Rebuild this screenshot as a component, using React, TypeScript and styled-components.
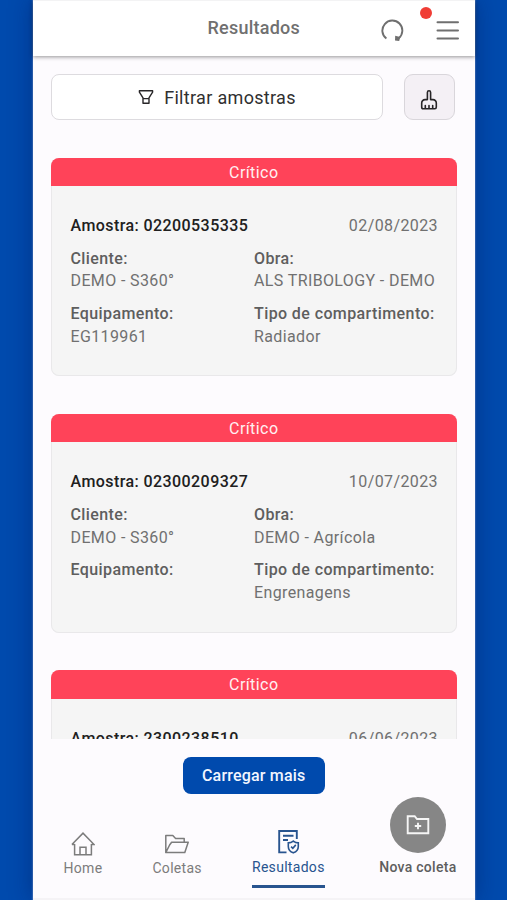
import React from "react";
import styled, { createGlobalStyle } from "styled-components";

const GlobalStyle = createGlobalStyle`
  * { box-sizing: border-box; }
  body { margin: 0; background: #004aad; font-family: Roboto, "Liberation Sans", sans-serif; }
  button { font-family: inherit; margin: 0; padding: 0; cursor: pointer; }
`;

const Backdrop = styled.div`
  height: 900px;
  padding: 0 32px 0 32.5px;
  overflow: hidden;
  background: #004aad;
`;

const Phone = styled.main`
  height: 100%;
  display: flex;
  flex-direction: column;
  background: #fdfbfe;
  box-shadow: 0 0 22px rgba(0, 20, 80, 0.42), 0 0 1px 1px rgba(110, 150, 210, 0.45);
`;

const Header = styled.header`
  height: 56px;
  flex: none;
  display: grid;
  grid-template-columns: 1fr auto 1fr;
  align-items: center;
  background: #fff;
  border-top: 1px solid #f3f3f4;
  box-shadow: 0 1px 4px rgba(0, 0, 0, 0.42);
`;

const Title = styled.h1`
  grid-column: 2;
  margin: 0 0 1px;
  font-size: 18px;
  font-weight: 500;
  line-height: 24px;
  letter-spacing: 0.25px;
  color: #707070;
`;

const HeaderActions = styled.div`
  position: relative;
  display: flex;
  justify-content: flex-end;
  align-items: center;
  gap: 31px;
  padding: 4px 15.5px 0 0;
  height: 100%;
`;

const Dot = styled.span`
  position: absolute;
  top: 6px;
  right: 43.5px;
  width: 12px;
  height: 12px;
  border-radius: 50%;
  background: #f03d35;
`;

const Filters = styled.div`
  flex: none;
  display: flex;
  gap: 21px;
  padding: 18px 20.5px 37.5px 18.5px;
`;

const FilterButton = styled.button`
  flex: 1;
  height: 46px;
  display: flex;
  align-items: center;
  justify-content: center;
  gap: 10.5px;
  border: 1px solid #dddbdf;
  border-radius: 8px;
  background: #fff;
  color: #303030;
  font-size: 18px;
  letter-spacing: 0.32px;
`;

const ClearButton = styled.button`
  width: 51px;
  height: 46px;
  display: flex;
  align-items: center;
  justify-content: center;
  padding-top: 5px;
  border: 1px solid #d9d6db;
  border-radius: 9px;
  background: #f4f0f5;
`;

const List = styled.section`
  flex: none;
  height: 581px;
  overflow: hidden;
  padding: 0 18.5px;
  display: flex;
  flex-direction: column;
  gap: 37.6px;
`;

const Card = styled.article`
  flex: none;
  height: 218.8px;
  border-radius: 8px;
  overflow: hidden;
  background: #f5f5f5;
  box-shadow: inset 0 0 0 1px #e9e8ea;
`;

const Status = styled.div`
  height: 28.5px;
  line-height: 29.5px;
  background: #ff4359;
  color: #fff0f2;
  text-align: center;
  font-size: 16px;
  letter-spacing: 0.42px;
`;

const CardBody = styled.div`
  padding: 28.75px 18.5px 0 19.5px;
  font-size: 16px;
  line-height: 22.75px;
  color: #707070;
`;

const CardTop = styled.div`
  display: flex;
  justify-content: space-between;
  margin-bottom: 10px;
`;

const SampleId = styled.strong`
  font-weight: 500;
  color: #202020;
  letter-spacing: 0.42px;
`;

const SampleDate = styled.time`
  letter-spacing: 0.4px;
`;

const Fields = styled.dl`
  margin: 0;
  display: grid;
  grid-template-columns: 183.5px 1fr;
  row-gap: 10px;
`;

const FieldBox = styled.div`
  min-width: 0;
  white-space: nowrap;
`;

const FieldLabel = styled.dt`
  font-weight: 500;
  color: #5e5e5e;
  letter-spacing: 0.4px;
`;

const FieldValue = styled.dd`
  margin: 0;
  letter-spacing: 0.38px;
`;

const LoadArea = styled.div`
  flex: none;
  display: flex;
  justify-content: center;
  padding: 18.5px 0 0;
`;

const LoadButton = styled.button`
  width: 141.5px;
  height: 37px;
  border: 0;
  border-radius: 8px;
  background: #004aad;
  color: #f2f6ff;
  font-size: 16px;
  font-weight: 500;
  letter-spacing: 0.2px;
`;

const Nav = styled.nav`
  flex: 1;
  display: flex;
  justify-content: space-between;
  align-items: flex-end;
  padding: 0 18.5px 0 31px;
  border-bottom: 2px solid #f5f3f6;
`;

const NavItem = styled.a<{ $active?: boolean; $strong?: boolean }>`
  display: flex;
  flex-direction: column;
  align-items: center;
  justify-content: flex-end;
  margin-right: ${(p) => (p.$active ? 4.5 : 0)}px;
  padding-bottom: ${(p) => (p.$active ? 10.5 : p.$strong ? 22 : 21)}px;
  color: ${(p) => (p.$active ? "#28548f" : p.$strong ? "#5e5e5e" : "#7c7c7c")};
  font-size: 14px;
  font-weight: ${(p) => (p.$strong ? 500 : 400)};
  line-height: 18px;
  letter-spacing: ${(p) => (p.$strong ? 0.28 : 0.3)}px;
  white-space: nowrap;
`;

const NavLabel = styled.span<{ $active?: boolean }>`
  margin-top: 3px;
  ${(p) => p.$active && "border-bottom: 3px solid #28548f; padding-bottom: 9px;"}
`;

const AddCircle = styled.span`
  width: 56px;
  height: 56px;
  margin-bottom: 2px;
  display: flex;
  align-items: center;
  justify-content: center;
  border-radius: 50%;
  background: #868686;
`;

const Icon = styled.svg`
  display: block;
  flex: none;
  fill: none;
  stroke: currentColor;
`;

const GrayIcon = styled(Icon)`
  color: #6f6f6f;
`;

const DarkIcon = styled(Icon)`
  color: #282628;
`;

const LightIcon = styled(Icon)`
  color: #f6f6f6;
`;

type Sample = {
  id: string;
  date: string;
  fields: { label: string; value: string }[];
};

const samples: Sample[] = [
  {
    id: "02200535335",
    date: "02/08/2023",
    fields: [
      { label: "Cliente:", value: "DEMO - S360°" },
      { label: "Obra:", value: "ALS TRIBOLOGY - DEMO" },
      { label: "Equipamento:", value: "EG119961" },
      { label: "Tipo de compartimento:", value: "Radiador" },
    ],
  },
  {
    id: "02300209327",
    date: "10/07/2023",
    fields: [
      { label: "Cliente:", value: "DEMO - S360°" },
      { label: "Obra:", value: "DEMO - Agrícola" },
      { label: "Equipamento:", value: "" },
      { label: "Tipo de compartimento:", value: "Engrenagens" },
    ],
  },
  { id: "2300238510", date: "06/06/2023", fields: [] },
];

function SampleCard({ sample }: { sample: Sample }) {
  return (
    <Card>
      <Status>Crítico</Status>
      <CardBody>
        <CardTop>
          <SampleId>Amostra: {sample.id}</SampleId>
          <SampleDate>{sample.date}</SampleDate>
        </CardTop>
        <Fields>
          {sample.fields.map((f) => (
            <FieldBox key={f.label}>
              <FieldLabel>{f.label}</FieldLabel>
              <FieldValue>{f.value}</FieldValue>
            </FieldBox>
          ))}
        </Fields>
      </CardBody>
    </Card>
  );
}

export default function App() {
  return (
    <>
      <GlobalStyle />
      <Backdrop>
        <Phone>
          <Header>
            <Title>Resultados</Title>
            <HeaderActions>
              <GrayIcon width="24" height="24" viewBox="0 0 24 24" strokeWidth="1.9">
                <path d="M5.4 19.6A10 10 0 1 1 17.8 19.2" />
                <path d="M14.2 16.8l5 1.2-1 4-4.2-.6z" fill="currentColor" stroke="none" />
              </GrayIcon>
              <GrayIcon width="24" height="24" viewBox="0 0 24 24" strokeWidth="2" strokeLinecap="round">
                <path d="M1.5 3.2h20.5M1.5 11.4h20.5M1.5 19.6h20.5" />
              </GrayIcon>
              <Dot />
            </HeaderActions>
          </Header>
          <Filters>
            <FilterButton>
              <DarkIcon width="16" height="16" viewBox="0 0 16 16" strokeWidth="1.4" strokeLinejoin="round">
                <path d="M1.4 1.7h13.2v1.5l-3.6 5.6v5.5H5V8.8L1.4 3.2zM5 9.6h6" />
              </DarkIcon>
              Filtrar amostras
            </FilterButton>
            <ClearButton aria-label="Limpar">
              <DarkIcon width="18" height="20" viewBox="0 0 18 20" strokeWidth="1.6" strokeLinejoin="round" strokeLinecap="round">
                <path d="M7.4 9.6V2.4a1.6 1.6 0 0 1 3.2 0v7.2h2.4a3.3 3.3 0 0 1 3.3 3.3v4q0 1.8-1.5 1.8H3.2q-1.5 0-1.5-1.8v-4A3.3 3.3 0 0 1 5 9.6z" />
                <path d="M5.3 18v-2.4M9 18v-2.4M12.7 18v-2.4" />
              </DarkIcon>
            </ClearButton>
          </Filters>
          <List>
            {samples.map((s) => (
              <SampleCard key={s.id} sample={s} />
            ))}
          </List>
          <LoadArea>
            <LoadButton>Carregar mais</LoadButton>
          </LoadArea>
          <Nav>
            <NavItem>
              <Icon width="24" height="24" viewBox="0 0 24 24" strokeWidth="1.5">
                <path d="M3.6 12v10.8h16.8V12M.9 12.6L12 1.2l11.1 11.4h-2.7M.9 12.6h2.7M9 22.8v-7.6h6v7.6" />
              </Icon>
              <NavLabel>Home</NavLabel>
            </NavItem>
            <NavItem>
              <Icon width="24" height="24" viewBox="0 0 24 24" strokeWidth="1.5" strokeLinejoin="round">
                <path d="M.8 20.6V3.4h7l2.8 3h8.6v3.9M.8 20.6h19L23.2 10.3H6.6L4.6 13z" />
              </Icon>
              <NavLabel>Coletas</NavLabel>
            </NavItem>
            <NavItem $active>
              <Icon width="26" height="26" viewBox="0 0 26 26" strokeWidth="1.9">
                <path d="M11.5 23.4H4.2V2h17.6v8M8 6.8h10.5M8 11h5" />
                <path d="M18.3 12.1q2.3 1.8 5 1.8v3.5q0 4.5-5 6.4-5-1.9-5-6.4v-3.5q2.7 0 5-1.8zM16.1 17.6l1.7 1.7 3-3.4" strokeWidth="1.6" />
              </Icon>
              <NavLabel $active>Resultados</NavLabel>
            </NavItem>
            <NavItem $strong>
              <AddCircle>
                <LightIcon width="24" height="24" viewBox="0 0 24 24" strokeWidth="1.9">
                  <path d="M1.7 20.2V3.2h7L11 6h11.3v14.2zM12 9.8v6.4M8.8 13h6.4" />
                </LightIcon>
              </AddCircle>
              <NavLabel>Nova coleta</NavLabel>
            </NavItem>
          </Nav>
        </Phone>
      </Backdrop>
    </>
  );
}
